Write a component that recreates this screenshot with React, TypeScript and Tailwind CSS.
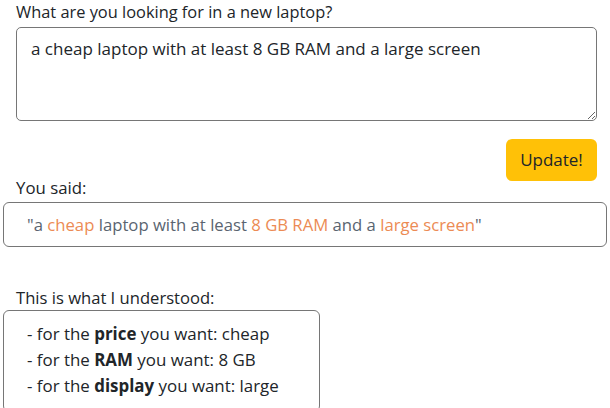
import React from 'react';

// Parsed slots from the user's request
const slots = [
  { name: 'price', value: 'cheap' },
  { name: 'RAM', value: '8 GB' },
  { name: 'display', value: 'large' },
];

export default function App() {
  const [query, setQuery] = React.useState(
    'a cheap laptop with at least 8 GB RAM and a large screen'
  );

  return (
    <div
      className="w-[610px] h-[408px] overflow-hidden bg-white text-[#212529] text-[16.4px] leading-[24px]"
      style={{ fontFamily: '"Open Sans", "Noto Sans", sans-serif' }}
    >
      <div className="pl-4 pr-[13px]">
        <label className="block h-[27px]">What are you looking for in a new laptop?</label>
        <textarea
          value={query}
          onChange={(e) => setQuery(e.target.value)}
          className="block w-full h-[94px] border border-[#767676] rounded-[5px] px-[14px] py-[9px] text-[17px] text-[#212529] outline-none resize-y"
        />
        <div className="flex justify-end mt-[18px]">
          <button className="w-[91px] h-[42px] bg-[#ffc107] rounded-md text-[17px] text-[#212529]">
            Update!
          </button>
        </div>
        <div className="mt-[-5px] h-[26px] text-[16.8px]">You said:</div>
      </div>

      <div className="mx-[3px] mt-0 h-[45px] border border-[#767676] rounded-md px-[23px] pt-[10px] text-[16.7px] text-[#5a6470]">
        "a <span className="text-[#ec8b54]">cheap</span> laptop with at least{' '}
        <span className="text-[#ec8b54]">8 GB RAM</span> and a{' '}
        <span className="text-[#ec8b54]">large screen</span>"
      </div>

      <div className="pl-4 mt-[39px] h-[24px] text-[16.6px]">This is what I understood:</div>

      <ul className="mx-[3px] mt-0 w-[317px] border border-[#767676] rounded-md px-[23px] pt-[10px] pb-3 text-[16.9px] leading-[26px]">
        {slots.map((s) => (
          <li key={s.name}>
            - for the <b className="font-bold">{s.name}</b> you want: {s.value}
          </li>
        ))}
      </ul>
    </div>
  );
}
